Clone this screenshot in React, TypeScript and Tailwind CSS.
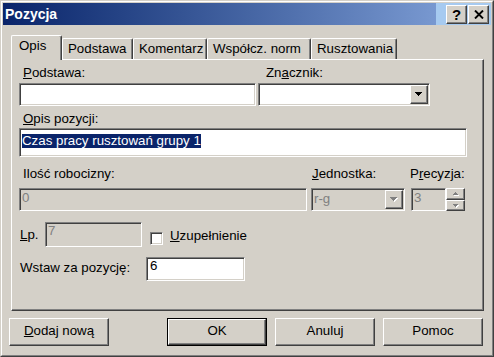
import React from "react";

const sunken =
  "border border-t-[#808080] border-l-[#808080] border-r-white border-b-white shadow-[inset_1px_1px_0_#404040,inset_-1px_-1px_0_#d4d0c8]";
const raised =
  "border border-t-white border-l-white border-r-[#404040] border-b-[#404040] shadow-[inset_-1px_-1px_0_#808080]";

function Down({ disabled }: { disabled?: boolean }) {
  const c = disabled ? "#808080" : "#000000";
  return (
    <svg width="8" height="5" viewBox="0 0 8 5" shapeRendering="crispEdges">
      {disabled && (
        <g fill="#ffffff">
          <rect x="1" y="1" width="7" height="1" />
          <rect x="2" y="2" width="5" height="1" />
          <rect x="3" y="3" width="3" height="1" />
          <rect x="4" y="4" width="1" height="1" />
        </g>
      )}
      <g fill={c}>
        <rect x="0" y="0" width="7" height="1" />
        <rect x="1" y="1" width="5" height="1" />
        <rect x="2" y="2" width="3" height="1" />
        <rect x="3" y="3" width="1" height="1" />
      </g>
    </svg>
  );
}

function SmallArrow({ up }: { up?: boolean }) {
  return (
    <svg width="6" height="4" viewBox="0 0 6 4" shapeRendering="crispEdges">
      {up ? (
        <>
          <g fill="#ffffff">
            <rect x="2" y="1" width="1" height="1" />
            <rect x="1" y="2" width="3" height="1" />
            <rect x="1" y="3" width="5" height="1" />
          </g>
          <g fill="#808080">
            <rect x="2" y="0" width="1" height="1" />
            <rect x="1" y="1" width="3" height="1" />
            <rect x="0" y="2" width="5" height="1" />
          </g>
        </>
      ) : (
        <>
          <g fill="#ffffff">
            <rect x="1" y="1" width="5" height="1" />
            <rect x="2" y="2" width="3" height="1" />
            <rect x="3" y="3" width="1" height="1" />
          </g>
          <g fill="#808080">
            <rect x="0" y="0" width="5" height="1" />
            <rect x="1" y="1" width="3" height="1" />
            <rect x="2" y="2" width="1" height="1" />
          </g>
        </>
      )}
    </svg>
  );
}

function Combo({ disabled, text }: { disabled?: boolean; text?: string }) {
  return (
    <div
      className={`${sunken} h-[23px] p-px flex ${disabled ? "bg-[#d4d0c8]" : "bg-white"}`}
    >
      <div className="flex-1 pl-px pt-px text-[#808080] overflow-hidden whitespace-nowrap">
        {text}
      </div>
      <div className={`${raised} w-[18px] h-full bg-[#d4d0c8] flex items-center justify-center`}>
        <Down disabled={disabled} />
      </div>
    </div>
  );
}

function Tab({ label, w, active }: { label: string; w: string; active?: boolean }) {
  if (active) {
    return (
      <div
        className={`${w} h-[25px] -mb-px relative z-10 bg-[#d4d0c8] border-t border-l border-r border-t-white border-l-white border-r-[#404040] shadow-[inset_-1px_0_0_#808080] rounded-tl-[2px] rounded-tr-[2px] pl-[7px] pt-[2px] whitespace-nowrap`}
      >
        {label}
      </div>
    );
  }
  return (
    <div
      className={`${w} h-[21px] border-t border-l border-r border-t-white border-l-white border-r-[#404040] shadow-[inset_-1px_0_0_#808080] rounded-tl-[2px] rounded-tr-[2px] pl-[5px] pt-[2px] whitespace-nowrap`}
    >
      {label}
    </div>
  );
}

function Button({ children, def }: { children: React.ReactNode; def?: boolean }) {
  if (def) {
    return (
      <div className="w-[100px] h-[28px] border border-black">
        <div className={`${raised} w-full h-full flex items-center justify-center pb-[2px]`}>
          {children}
        </div>
      </div>
    );
  }
  return (
    <div className={`${raised} w-[100px] h-[28px] flex items-center justify-center pb-[2px]`}>
      {children}
    </div>
  );
}

export default function App() {
  return (
    <div className="w-[494px] h-[357px] bg-[#d4d0c8] border border-t-[#d4d0c8] border-l-[#d4d0c8] border-r-[#404040] border-b-[#404040] font-['Liberation_Sans',Arial,sans-serif] text-[13.3px] leading-[16px] text-black select-none">
      <div className="w-full h-full border border-t-white border-l-white border-r-[#808080] border-b-[#808080] p-px flex flex-col">
        {/* Title bar */}
        <div className="h-[22px] flex bg-[#a6caf0]">
          <div className="w-[433px] h-full bg-gradient-to-r from-[#0a246a] to-[#7898d0] flex items-center pl-[2px]">
            <span className="text-white font-bold text-[14px] leading-[16px]">Pozycja</span>
          </div>
          <div className="flex-1 flex justify-end gap-[1px] pr-[2px] pt-[2px]">
            <div className={`${raised} bg-[#d4d0c8] w-[21px] h-[19px] flex items-center justify-center`}>
              <span className="font-bold text-[15px] leading-none">?</span>
            </div>
            <div className={`${raised} bg-[#d4d0c8] w-[21px] h-[19px] flex items-center justify-center`}>
              <svg width="10" height="9" viewBox="0 0 10 9">
                <path d="M1 0.5L9 8.5M9 0.5L1 8.5" stroke="#000" strokeWidth="1.9" />
              </svg>
            </div>
          </div>
        </div>

        {/* Tabs */}
        <div className="mt-[10px] ml-[8px] h-[24px] flex items-end">
          <Tab label="Opis" w="w-[51px]" active />
          <Tab label="Podstawa" w="w-[71px]" />
          <Tab label="Komentarz" w="w-[74px]" />
          <Tab label="Współcz. norm" w="w-[104px]" />
          <Tab label="Rusztowania" w="w-[86px]" />
        </div>

        {/* Panel */}
        <div className="ml-[8px] w-[473px] h-[252px] border border-t-white border-l-white border-r-[#404040] border-b-[#404040] shadow-[inset_-1px_-1px_0_#808080] flex flex-col">
          {/* Row 1 */}
          <div className="flex ml-[7px] mt-[5px]">
            <div className="w-[237px]">
              <div className="pl-[4px] h-[16px] mb-[2px]">
                <span className="underline">P</span>odstawa:
              </div>
              <div className={`${sunken} h-[23px] bg-white`} />
            </div>
            <div className="w-[172px] ml-[2px]">
              <div className="pl-[8px] h-[16px] mb-[2px]">
                Zn<span className="underline">a</span>cznik:
              </div>
              <Combo />
            </div>
          </div>

          {/* Opis pozycji */}
          <div className="ml-[7px] mt-[5px]">
            <div className="pl-[4px] h-[16px] mb-px">
              <span className="underline">O</span>pis pozycji:
            </div>
            <div className={`${sunken} w-[448px] h-[29px] bg-white pl-[2px] pt-[4px]`}>
              <span className="inline-block h-[14px] leading-[14px] bg-[#0a246a] text-white whitespace-nowrap">
                Czas pracy rusztowań grupy 1
              </span>
            </div>
          </div>

          {/* Row 3 */}
          <div className="flex ml-[7px] mt-[9px]">
            <div className="w-[288px]">
              <div className="pl-[4px] h-[16px] mb-[6px]">Ilość robocizny:</div>
              <div className={`${sunken} h-[23px] bg-[#d4d0c8] pl-[2px] pt-[1px] text-[#808080]`}>0</div>
            </div>
            <div className="w-[94px] ml-[4px]">
              <div className="pl-px h-[16px] mb-[6px]">
                <span className="underline">J</span>ednostka:
              </div>
              <Combo disabled text="r-g" />
            </div>
            <div className="w-[55px] ml-[5px]">
              <div className="h-[16px] mb-[6px] whitespace-nowrap">
                P<span className="underline">r</span>ecyzja:
              </div>
              <div className="flex ml-px h-[23px]">
                <div className={`${sunken} w-[35px] h-[23px] bg-[#d4d0c8] pl-[2px] pt-[1px] text-[#808080]`}>3</div>
                <div className="w-[19px] h-[23px] flex flex-col">
                  <div className={`${raised} h-[12px] bg-[#d4d0c8] flex items-center justify-center`}>
                    <SmallArrow up />
                  </div>
                  <div className={`${raised} h-[11px] bg-[#d4d0c8] flex items-center justify-center`}>
                    <SmallArrow />
                  </div>
                </div>
              </div>
            </div>
          </div>

          {/* Lp row */}
          <div className="flex ml-[8px] mt-[11px] h-[25px] items-start">
            <div className="w-[25px] mt-[5px]">
              <span className="underline">L</span>p.
            </div>
            <div className={`${sunken} w-[97px] h-[25px] bg-[#d4d0c8] pl-[2px] text-[#808080]`}>7</div>
            <div className={`${sunken} ml-[8px] mt-[10px] w-[13px] h-[13px] bg-white`} />
            <div className="ml-[7px] mt-[6px]">
              <span className="underline">U</span>zupełnienie
            </div>
          </div>

          {/* Wstaw row */}
          <div className="flex ml-[8px] mt-[10px] h-[24px] items-start">
            <div className="w-[126px] mt-[3px]">Wstaw za pozycję:</div>
            <div className={`${sunken} w-[99px] h-[24px] bg-white pl-[3px]`}>6</div>
          </div>
        </div>

        {/* Buttons */}
        <div className="flex ml-[6px] mt-[7px]">
          <Button>
            <span>
              <span className="underline">D</span>odaj nową
            </span>
          </Button>
          <div className="ml-[58px]">
            <Button def>OK</Button>
          </div>
          <div className="ml-[8px]">
            <Button>Anuluj</Button>
          </div>
          <div className="ml-[8px]">
            <Button>Pomoc</Button>
          </div>
        </div>
      </div>
    </div>
  );
}
